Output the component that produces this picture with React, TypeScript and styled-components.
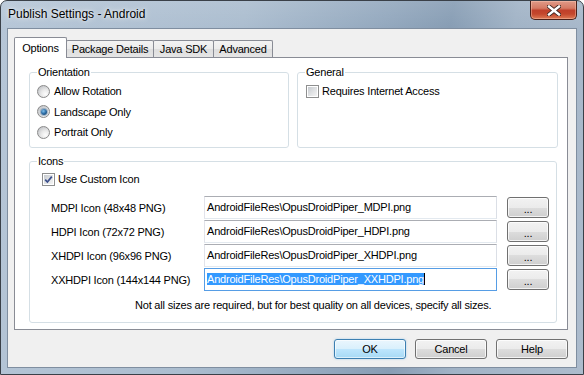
import React from "react";
import styled, { createGlobalStyle, css } from "styled-components";

const Global = createGlobalStyle`
  html, body { margin: 0; padding: 0; background: #ffffff; }
  #root { width: 584px; height: 375px; }
`;

const Window = styled.div`
  width: 584px;
  height: 375px;
  box-sizing: border-box;
  border: 1px solid #3a4048;
  border-radius: 7px 7px 0 0;
  background:
    linear-gradient(180deg, rgba(255, 255, 255, 0.1) 0px, rgba(255, 255, 255, 0) 28px),
    linear-gradient(100deg, #b6c6d7 0%, #abbdcf 38%, #93a8be 60%, #879db4 70%, #a1b3c6 80%, #adbccd 100%);
  display: flex;
  flex-direction: column;
  font-family: "Liberation Sans", Arial, sans-serif;
  font-size: 11px;
  letter-spacing: -0.2px;
  color: #000;
  overflow: hidden;
`;

const TitleBar = styled.div`
  height: 27px;
  flex: none;
  display: flex;
  align-items: flex-start;
  justify-content: space-between;
  padding-left: 7px;
`;

const Title = styled.div`
  font-family: "Liberation Sans", Arial, sans-serif;
  font-size: 12px;
  letter-spacing: 0;
  line-height: 27px;
  color: #000;
  text-shadow: 0 0 6px rgba(255, 255, 255, 0.85), 0 0 3px rgba(255, 255, 255, 0.7);
`;

const CloseButton = styled.div`
  width: 47px;
  height: 19px;
  margin-right: 6px;
  box-sizing: border-box;
  border: 1px solid #4a2019;
  border-top: none;
  border-radius: 0 0 5px 5px;
  background: linear-gradient(180deg, #e09a88 0%, #d57a64 40%, #c0402a 52%, #c4472c 72%, #de7a55 100%);
  box-shadow: inset 0 0 0 1px rgba(255, 210, 190, 0.4);
  display: flex;
  align-items: center;
  justify-content: center;
`;

const Client = styled.div`
  flex: 1;
  margin: 0 6px 6px 6px;
  border: 1px solid #7f8ea0;
  background: #f0f0f0;
  padding: 8px 8px 0 6px;
  display: flex;
  flex-direction: column;
`;

const TabRow = styled.div`
  height: 20px;
  display: flex;
  align-items: flex-end;
  flex: none;
`;

const Tab = styled.div<{ $active?: boolean; $w: number }>`
  width: ${(p) => p.$w}px;
  box-sizing: border-box;
  border: 1px solid #898c95;
  border-bottom: none;
  border-radius: 2px 2px 0 0;
  text-align: center;
  white-space: nowrap;
  & + & { margin-left: -1px; }
  ${(p) =>
    p.$active
      ? css`
          height: 21px;
          margin-bottom: -1px;
          background: #ffffff;
          position: relative;
          z-index: 1;
          line-height: 20px;
        `
      : css`
          height: 17px;
          background: linear-gradient(180deg, #f3f3f3 0%, #ebebeb 50%, #dedede 50%, #e5e5e5 100%);
          line-height: 17px;
        `}
`;

const Panel = styled.div`
  height: 273px;
  box-sizing: border-box;
  border: 1px solid #898c95;
  background: #ffffff;
  padding: 8px 10px 6px 14px;
  display: flex;
  flex-direction: column;
`;

const TopRow = styled.div`
  display: grid;
  grid-template-columns: 260px 261px;
  column-gap: 8px;
`;

const Group = styled.fieldset<{ $h: number; $top?: number }>`
  margin: ${(p) => p.$top ?? 0}px 0 0 0;
  padding: 0 7px;
  height: ${(p) => p.$h}px;
  box-sizing: border-box;
  border: 1px solid #d5dfe5;
  border-radius: 3px;
  min-width: 0;
`;

const Legend = styled.legend`
  padding: 0 1px;
  line-height: 13px;
  font-size: 11px;
`;

const OptionRow = styled.div<{ $h?: number; $indent?: number; $gap?: number }>`
  height: ${(p) => p.$h ?? 20}px;
  display: flex;
  align-items: center;
  gap: ${(p) => p.$gap ?? 4}px;
  padding-left: ${(p) => p.$indent ?? 0}px;
`;

const OptionList = styled.div<{ $top: number }>`
  padding-top: ${(p) => p.$top}px;
`;

const RadioDot = styled.span<{ $checked?: boolean }>`
  width: 13px;
  height: 13px;
  flex: none;
  box-sizing: border-box;
  border-radius: 50%;
  border: 1px solid #8a8a8a;
  background: radial-gradient(circle at 68% 72%, #fdfdfd 0%, #e8e8e8 40%, #b2b5ba 100%);
  display: flex;
  align-items: center;
  justify-content: center;
  &::after {
    content: "";
    display: ${(p) => (p.$checked ? "block" : "none")};
    width: 6px;
    height: 6px;
    border-radius: 50%;
    background: radial-gradient(circle at 40% 35%, #7fc0ec 0%, #2a6aa3 50%, #0e3458 100%);
    box-shadow: 0 0 1px 1px rgba(30, 80, 130, 0.4);
  }
`;

const CheckBoxBox = styled.span`
  width: 13px;
  height: 13px;
  flex: none;
  box-sizing: border-box;
  border: 1px solid #8e8f8f;
  background: #ffffff;
  padding: 1px;
  display: flex;
`;

const CheckInner = styled.span`
  flex: 1;
  background: linear-gradient(135deg, #c6cacf 0%, #dfe1e3 50%, #f4f4f4 100%);
  display: flex;
  align-items: center;
  justify-content: center;
`;

const Rows = styled.div`
  margin-top: 7px;
  padding-left: 14px;
  display: grid;
  grid-template-columns: 143px 293px 42px;
  grid-auto-rows: 23px;
  column-gap: 10px;
  row-gap: 1px;
  align-items: center;
`;

const RowLabel = styled.div`
  white-space: nowrap;
`;

const TextField = styled.div<{ $focused?: boolean }>`
  height: 23px;
  box-sizing: border-box;
  border: 1px solid;
  border-color: ${(p) => (p.$focused ? "#569de5" : "#abadb3 #dbdfe6 #e3e9ef #e2e3ea")};
  background: #fff;
  padding-left: 2px;
  line-height: 20px;
  white-space: nowrap;
  overflow: hidden;
`;

const Selected = styled.span`
  background: #3399ff;
  color: #fff;
  border-right: 1px solid #000;
`;

const buttonBase = css`
  box-sizing: border-box;
  border: 1px solid #707070;
  border-radius: 3px;
  background: linear-gradient(180deg, #f2f2f2 0%, #ebebeb 50%, #dddddd 50%, #cfcfcf 100%);
  box-shadow: inset 0 0 0 1px rgba(255, 255, 255, 0.75);
  font-family: "Liberation Sans", Arial, sans-serif;
  font-size: 11px;
  color: #000;
  text-align: center;
`;

const BrowseButton = styled.div`
  ${buttonBase}
  height: 21px;
  line-height: 21px;
  padding-top: 1px;
`;

const Note = styled.div`
  margin-top: 8px;
  padding-left: 98px;
  line-height: 13px;
  white-space: nowrap;
`;

const ButtonBar = styled.div`
  margin-top: 9px;
  display: flex;
  justify-content: flex-end;
  gap: 9px;
`;

const DialogButton = styled.div<{ $default?: boolean }>`
  ${buttonBase}
  width: 72px;
  height: 20px;
  line-height: 18px;
  ${(p) =>
    p.$default &&
    css`
      border-color: #3c7fb1;
      background: linear-gradient(180deg, #eaf6fd 0%, #d9f0fc 50%, #bee6fd 50%, #a7d9f5 100%);
      box-shadow: inset 0 0 0 1px rgba(255, 255, 255, 0.6), 0 0 2px rgba(80, 170, 230, 0.5);
    `}
`;

const Check = () => (
  <svg width="9" height="9" viewBox="0 0 9 9">
    <path d="M1.2 4.6 L3.4 7 L7.8 1.6" fill="none" stroke="#3b4f8c" strokeWidth="1.7" />
  </svg>
);

const CheckBox = ({ checked }: { checked?: boolean }) => (
  <CheckBoxBox>
    <CheckInner>{checked && <Check />}</CheckInner>
  </CheckBoxBox>
);

const CloseGlyph = () => (
  <svg width="14" height="11" viewBox="0 0 14 11">
    <path d="M2 1.5 L12 9.5 M12 1.5 L2 9.5" stroke="#3d2620" strokeWidth="4.2" strokeLinecap="square" />
    <path d="M2 1.5 L12 9.5 M12 1.5 L2 9.5" stroke="#ffffff" strokeWidth="2.4" strokeLinecap="square" />
  </svg>
);

const files = [
  { label: "MDPI Icon (48x48 PNG)", value: "AndroidFileRes\\OpusDroidPiper_MDPI.png" },
  { label: "HDPI Icon (72x72 PNG)", value: "AndroidFileRes\\OpusDroidPiper_HDPI.png" },
  { label: "XHDPI Icon (96x96 PNG)", value: "AndroidFileRes\\OpusDroidPiper_XHDPI.png" },
  { label: "XXHDPI Icon (144x144 PNG)", value: "AndroidFileRes\\OpusDroidPiper_XXHDPI.png", focused: true },
];

const tabs = [
  { name: "Options", w: 53, active: true },
  { name: "Package Details", w: 88 },
  { name: "Java SDK", w: 61 },
  { name: "Advanced", w: 60 },
];

export default function App() {
  return (
    <>
      <Global />
      <Window>
        <TitleBar>
          <Title>Publish Settings - Android</Title>
          <CloseButton>
            <CloseGlyph />
          </CloseButton>
        </TitleBar>
        <Client>
          <TabRow>
            {tabs.map((t) => (
              <Tab key={t.name} $w={t.w} $active={t.active}>
                {t.name}
              </Tab>
            ))}
          </TabRow>
          <Panel>
            <TopRow>
              <Group $h={82}>
                <Legend>Orientation</Legend>
                <OptionList $top={2}>
                  <OptionRow $h={20.5}>
                    <RadioDot />
                    Allow Rotation
                  </OptionRow>
                  <OptionRow $h={20.5}>
                    <RadioDot $checked />
                    Landscape Only
                  </OptionRow>
                  <OptionRow $h={20.5}>
                    <RadioDot />
                    Portrait Only
                  </OptionRow>
                </OptionList>
              </Group>
              <Group $h={82}>
                <Legend>General</Legend>
                <OptionList $top={2}>
                  <OptionRow $h={20.5} $indent={1} $gap={3}>
                    <CheckBox />
                    Requires Internet Access
                  </OptionRow>
                </OptionList>
              </Group>
            </TopRow>
            <Group $h={168} $top={7}>
              <Legend>Icons</Legend>
              <OptionList $top={1}>
                <OptionRow $indent={5} $gap={3}>
                  <CheckBox checked />
                  Use Custom Icon
                </OptionRow>
              </OptionList>
              <Rows>
                {files.map((f) => (
                  <React.Fragment key={f.label}>
                    <RowLabel>{f.label}</RowLabel>
                    <TextField $focused={f.focused}>
                      {f.focused ? <Selected>{f.value}</Selected> : f.value}
                    </TextField>
                    <BrowseButton>...</BrowseButton>
                  </React.Fragment>
                ))}
              </Rows>
              <Note>Not all sizes are required, but for best quality on all devices, specify all sizes.</Note>
            </Group>
          </Panel>
          <ButtonBar>
            <DialogButton $default>OK</DialogButton>
            <DialogButton>Cancel</DialogButton>
            <DialogButton>Help</DialogButton>
          </ButtonBar>
        </Client>
      </Window>
    </>
  );
}
